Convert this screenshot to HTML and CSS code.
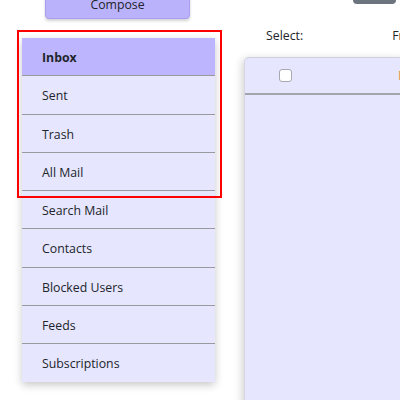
FILE: index.html
```html
<!DOCTYPE html>
<html>
<head>
<meta charset="utf-8">
<link rel="stylesheet" href="styles.css">
</head>
<body>
<div class="page">
  <aside class="side">
    <button class="compose">Compose</button>
    <ul class="nav">
      <li class="item active">Inbox</li>
      <li class="item">Sent</li>
      <li class="item">Trash</li>
      <li class="item">All Mail</li>
      <li class="item">Search Mail</li>
      <li class="item">Contacts</li>
      <li class="item">Blocked Users</li>
      <li class="item">Feeds</li>
      <li class="item">Subscriptions</li>
    </ul>
    <div class="highlight"></div>
  </aside>
  <main class="main">
    <div class="topbar"><span class="topbtn"></span></div>
    <div class="controls">
      <span class="select">Select:</span>
      <span class="filter">Fr</span>
    </div>
    <div class="panel">
      <div class="panel-head">
        <span class="check"></span>
        <span class="col">F</span>
      </div>
      <div class="panel-body"></div>
    </div>
  </main>
</div>
</body>
</html>
```

FILE: styles.css
```css
html, body {
  margin: 0;
  padding: 0;
  background: #ffffff;
  overflow: hidden;
}
body {
  font-family: "Open Sans", "Noto Sans", sans-serif;
  font-size: 12.3px;
  color: #212529;
  width: 400px;
  height: 400px;
}
.page {
  display: flex;
  align-items: flex-start;
}
.side {
  position: relative;
  width: 222px;
  flex: 0 0 222px;
  display: flex;
  flex-direction: column;
}
.compose {
  margin: -11px 0 0 45px;
  width: 145px;
  height: 30px;
  border: 1px solid #a99ff0;
  border-radius: 4px;
  background: #bbb2fc;
  box-shadow: 0 2px 3px rgba(0,0,0,0.18);
  font-family: inherit;
  font-size: 12.3px;
  color: #212529;
  padding: 0;
}
.nav {
  list-style: none;
  margin: 19px 0 0 22px;
  padding: 0;
  width: 193px;
  background: #e6e6fe;
  box-shadow: 0 3px 8px rgba(0,0,0,0.22);
}
.item {
  height: 34.3px;
  line-height: 34.3px;
  padding: 3px 0 0 20px;
  border-bottom: 1px solid #9a9a9e;
  box-sizing: content-box;
}
.item:last-child {
  border-bottom: none;
}
.item.active {
  background: #bdb5fd;
  font-weight: 700;
}
.highlight {
  position: absolute;
  left: 17px;
  top: 30px;
  width: 201px;
  height: 164px;
  border: 2px solid #ff0000;
  pointer-events: none;
}
.main {
  flex: 1;
  padding-left: 22px;
  display: flex;
  flex-direction: column;
}
.topbar {
  height: 26px;
  position: relative;
}
.topbtn {
  position: absolute;
  left: 109px;
  top: -11px;
  width: 43px;
  height: 15px;
  border-radius: 4px;
  background: #6c757d;
}
.controls {
  display: flex;
  height: 31px;
  align-items: flex-start;
}
.select {
  margin-left: 22px;
  line-height: 20px;
}
.filter {
  margin-left: 89px;
  line-height: 20px;
}
.panel {
  background: #e6e6fe;
  border-radius: 5px 0 0 0;
  box-shadow: -2px 2px 8px rgba(0,0,0,0.18);
  border-left: 1px solid #d6d6e2;
  border-top: 1px solid #d0d0dc;
  height: 400px;
}
.panel-head {
  height: 35px;
  border-bottom: 2px solid #a4a4ac;
  display: flex;
  align-items: center;
}
.check {
  margin-left: 34px;
  width: 11px;
  height: 11px;
  border: 1px solid #a8a8b0;
  border-radius: 3px;
  background: #ffffff;
}
.col {
  margin-left: 106px;
  color: #e8924a;
}
```
